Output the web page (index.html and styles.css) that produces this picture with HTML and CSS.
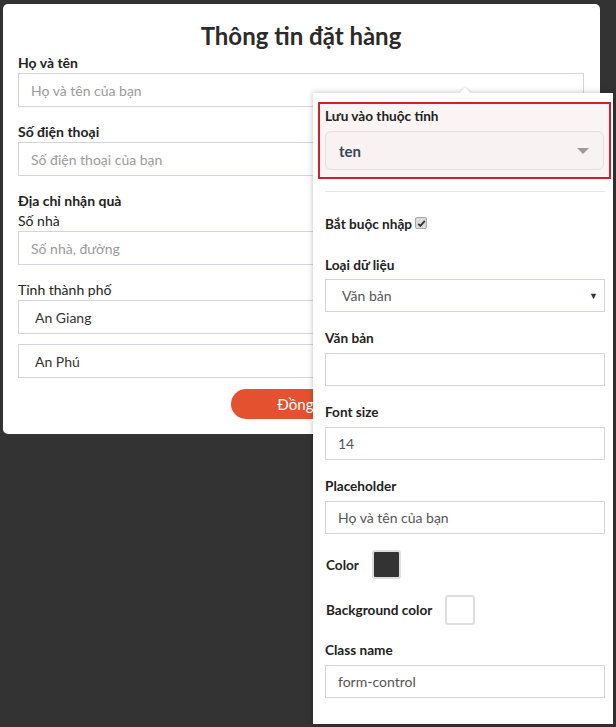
FILE: index.html
```html
<!DOCTYPE HTML>
<html>
  <head>
    <meta http-equiv="content-type" content="text/html; charset=utf-8">
    <title>Thông tin đặt hàng</title>
    <link rel="stylesheet" href="styles.css">
  </head>
  <body>
    <div id="container">
      <form class="orderCard">
        <h1 class="orderTitle">Thông tin đặt hàng</h1>

        <label class="fieldLabel">Họ và tên</label>
        <input class="textInput" type="text" placeholder="Họ và tên của bạn">

        <label class="fieldLabel">Số điện thoại</label>
        <input class="textInput" type="text" placeholder="Số điện thoại của bạn">

        <div class="fieldLabel">Địa chỉ nhận quà</div>
        <label class="subLabel">Số nhà</label>
        <input class="textInput lastInput" type="text" placeholder="Số nhà, đường">

        <label class="subLabel spaced">Tỉnh thành phố</label>
        <select class="selectInput">
          <option>An Giang</option>
        </select>
        <select class="selectInput secondSelect">
          <option>An Phú</option>
        </select>

        <div class="buttonRow">
          <button class="submitButton" type="button">Đồng ý</button>
        </div>
      </form>

      <div class="propPanel">
        <div class="highlightBox">
          <div class="panelLabel">Lưu vào thuộc tính</div>
          <div class="attrSelect">
            <span class="attrValue">ten</span>
            <span class="attrCaret"></span>
          </div>
        </div>

        <div class="separator"></div>

        <div class="checkRow">
          <span class="panelLabel">Bắt buộc nhập</span>
          <span class="fakeCheck">
            <svg width="9" height="9" viewBox="0 0 9 9"><path d="M1.3 4.8 L3.4 6.9 L7.8 1.8" fill="none" stroke="#333" stroke-width="1.8"/></svg>
          </span>
        </div>

        <div class="panelGroup selectGroup">
          <div class="panelLabel">Loại dữ liệu</div>
          <div class="panelSelect">
            <span>Văn bản</span>
            <span class="nativeArrow">▼</span>
          </div>
        </div>

        <div class="panelGroup">
          <div class="panelLabel">Văn bản</div>
          <input class="panelInput" type="text" value="">
        </div>

        <div class="panelGroup">
          <div class="panelLabel">Font size</div>
          <input class="panelInput" type="text" value="14">
        </div>

        <div class="panelGroup">
          <div class="panelLabel">Placeholder</div>
          <input class="panelInput" type="text" value="Họ và tên của bạn">
        </div>

        <div class="colorRow">
          <span class="panelLabel colorLabel">Color</span>
          <span class="swatch darkSwatch"></span>
        </div>

        <div class="colorRow">
          <span class="panelLabel colorLabel">Background color</span>
          <span class="swatch whiteSwatch"></span>
        </div>

        <div class="panelGroup classGroup">
          <div class="panelLabel">Class name</div>
          <input class="panelInput" type="text" value="form-control">
        </div>
      </div>
    </div>
  </body>
</html>
```

FILE: styles.css
```css
body {
  margin: 0;
  background-color: #333333;
  color: #222;
  font-family: "Lato", "Liberation Sans", sans-serif;
  font-size: 14px;
}

#container {
  position: relative;
  height: 727px;
  overflow: hidden;
}

/* left order form */
.orderCard {
  width: 597px;
  box-sizing: border-box;
  margin: 4px 0 0 3px;
  padding: 17px 16px 15px 15px;
  background-color: #fff;
  border-radius: 5px;
  display: flex;
  flex-direction: column;
}

.orderTitle {
  margin: 0 0 2px 0;
  font-size: 24px;
  line-height: 30px;
  font-weight: bold;
  text-align: center;
  color: #2b2b2b;
}

.fieldLabel {
  display: block;
  font-weight: bold;
  line-height: 20px;
  color: #222;
}

.subLabel {
  display: block;
  line-height: 20px;
  color: #222;
}

.subLabel.spaced {
  margin-top: 15px;
}

.textInput {
  display: block;
  width: 100%;
  height: 34px;
  box-sizing: border-box;
  margin: 0 0 15px 0;
  padding: 0 12px;
  border: 1px solid #d3d4df;
  font-family: inherit;
  font-size: 14px;
  color: #333;
  outline: none;
}

.textInput::placeholder {
  color: #9a9a9a;
}

.textInput.lastInput {
  margin-bottom: 0;
}

.selectInput {
  -webkit-appearance: none;
  appearance: none;
  display: block;
  width: 100%;
  height: 34px;
  box-sizing: border-box;
  padding: 0 16px;
  border: 1px solid #d3d4df;
  border-radius: 0;
  background-color: #fff;
  font-family: inherit;
  font-size: 14px;
  color: #333;
}

.secondSelect {
  margin-top: 10px;
}

.buttonRow {
  display: flex;
  justify-content: center;
  margin-top: 11px;
}

.submitButton {
  width: 140px;
  height: 30px;
  border: none;
  border-radius: 15px;
  background-color: #e4512f;
  color: #fff;
  font-family: inherit;
  font-size: 15px;
}

/* property popover */
.propPanel {
  position: absolute;
  left: 313px;
  top: 93px;
  width: 300px;
  height: 631px;
  box-sizing: border-box;
  padding: 9px 8px 0 12px;
  background-color: #fff;
  box-shadow: 0 0 6px rgba(0, 0, 0, 0.25);
}

.propPanel::before {
  content: "";
  position: absolute;
  top: -4px;
  left: 148px;
  width: 8px;
  height: 8px;
  background-color: #fff;
  transform: rotate(45deg);
  box-shadow: -1px -1px 2px rgba(0, 0, 0, 0.1);
}

.highlightBox {
  margin: 0 -6px 0 -7px;
  padding: 3px 5px 7px 5px;
  border: 2px solid #d21f2d;
  background-color: #faf4f4;
}

.panelLabel {
  font-weight: bold;
  font-size: 13.6px;
  line-height: 20px;
  color: #222;
}

.highlightBox .panelLabel {
  line-height: 18px;
  margin-bottom: 6px;
}

.attrSelect {
  height: 39px;
  box-sizing: border-box;
  border: 1px solid #eadfdf;
  border-radius: 6px;
  background-color: #f9f2f2;
  padding: 0 13px;
  display: flex;
  align-items: center;
  justify-content: space-between;
}

.attrValue {
  font-weight: bold;
  font-size: 15px;
  color: #3a4556;
}

.attrCaret {
  width: 0;
  height: 0;
  border-left: 6px solid transparent;
  border-right: 6px solid transparent;
  border-top: 6px solid #9b9b9b;
  margin-right: 1px;
}

.separator {
  height: 1px;
  background-color: #e6e6e6;
  margin: 12px 0 22px 0;
}

.checkRow {
  display: flex;
  align-items: center;
  height: 20px;
  margin-bottom: 21px;
}

.fakeCheck {
  display: inline-flex;
  align-items: center;
  justify-content: center;
  width: 10px;
  height: 10px;
  margin: -2px 0 0 3px;
  border: 1px solid #a9a9a9;
  border-radius: 2px;
  background-color: #dcdcdc;
}

.panelGroup {
  margin-bottom: 16px;
}

.panelGroup .panelLabel {
  margin-bottom: 5px;
}

.selectGroup .panelLabel {
  margin-bottom: 4px;
}

.panelSelect {
  height: 33px;
  box-sizing: border-box;
  border: 1px solid #d3d4df;
  padding: 0 6px 0 16px;
  display: flex;
  align-items: center;
  justify-content: space-between;
  color: #555;
}

.nativeArrow {
  font-size: 9px;
  color: #333;
}

.panelInput {
  display: block;
  width: 100%;
  height: 33px;
  box-sizing: border-box;
  padding: 0 12px;
  border: 1px solid #d3d4df;
  font-family: inherit;
  font-size: 14px;
  color: #555;
  outline: none;
}

.colorRow {
  display: flex;
  align-items: center;
  margin-bottom: 16px;
}

.colorLabel {
  margin-left: 1px;
  margin-right: 13px;
}

.swatch {
  display: inline-block;
  box-sizing: border-box;
  border: 2px solid #dedede;
  border-radius: 3px;
}

.darkSwatch {
  width: 29px;
  height: 29px;
  background-color: #333;
}

.whiteSwatch {
  width: 30px;
  height: 30px;
  background-color: #fff;
}

.classGroup {
  margin-top: -1px;
}
```
